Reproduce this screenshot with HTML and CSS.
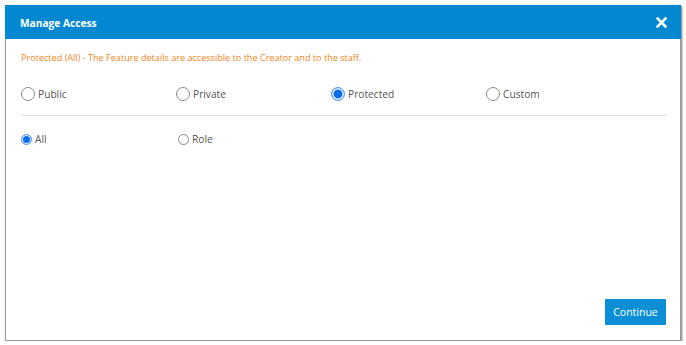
FILE: index.html
```html
<!DOCTYPE html>
<html lang="en">
<head>
  <meta charset="UTF-8" />
  <title>Manage Access</title>
  <link rel="stylesheet" href="styles.css">
</head>
<body>

  <div class="modal">
    <div class="modal-header">
      <h2>Manage Access</h2>
      <span class="close" aria-label="Close">
        <svg width="11" height="11" viewBox="0 0 11 11">
          <path d="M1.5 1.5L9.5 9.5M9.5 1.5L1.5 9.5" stroke="#fff" stroke-width="2.6" stroke-linecap="square" />
        </svg>
      </span>
    </div>

    <div class="modal-body">
      <p class="notice">Protected (All) - The Feature details are accessible to the Creator and to the staff.</p>

      <div class="options">
        <label class="option"><input type="radio" name="access" /> Public</label>
        <label class="option"><input type="radio" name="access" /> Private</label>
        <label class="option"><input type="radio" name="access" checked /> Protected</label>
        <label class="option"><input type="radio" name="access" /> Custom</label>
      </div>

      <hr class="divider" />

      <div class="options sub">
        <label class="option"><input type="radio" name="scope" checked /> All</label>
        <label class="option"><input type="radio" name="scope" /> Role</label>
      </div>
    </div>

    <div class="modal-footer">
      <button class="btn">Continue</button>
    </div>
  </div>

</body>
</html>
```

FILE: styles.css
```css
* {
  margin: 0;
  padding: 0;
  box-sizing: border-box;
}

body {
  font-family: 'Open Sans', 'Noto Sans', sans-serif;
  background-color: #fff;
  color: #555;
}

.modal {
  margin: 5px 0 0 5px;
  width: 676px;
  height: 336px;
  background: #fff;
  border: 1px solid #9a9a9a;
  border-top: none;
  box-shadow: 1px 1px 2px rgba(0, 0, 0, 0.55);
  display: flex;
  flex-direction: column;
}

.modal-header {
  height: 34px;
  background-color: #0288d1;
  display: flex;
  align-items: center;
  justify-content: space-between;
  padding: 0 14px 0 15px;
  margin: 0 -1px;
}

.modal-header h2 {
  font-size: 10.2px;
  font-weight: 700;
  color: #fff;
  padding-top: 1px;
}

.close {
  display: flex;
  cursor: pointer;
}

.modal-body {
  padding: 12px 14px 0 15px;
}

.notice {
  font-size: 9.1px;
  line-height: 14px;
  color: #f0861c;
}

.options {
  display: flex;
  margin-top: 21px;
}

.option {
  width: 155px;
  height: 16px;
  display: flex;
  align-items: center;
  gap: 3px;
  font-size: 10.2px;
  color: #555;
  cursor: pointer;
}

.option input {
  appearance: none;
  width: 14px;
  height: 14px;
  border: 1px solid #8a8a8a;
  border-radius: 50%;
  background: #fff;
  margin: 0;
}

.option input:checked {
  border: 1px solid #5aa0f5;
  background: #0a6ef0;
  box-shadow: inset 0 0 0 1.5px #fff;
}

.divider {
  border: none;
  border-top: 1px solid #dedede;
  margin-top: 13px;
}

.sub {
  margin-top: 15px;
}

.sub .option {
  width: 157px;
}

.sub .option input {
  width: 11px;
  height: 11px;
}

.sub .option input:checked {
  box-shadow: inset 0 0 0 1px #fff;
}

.modal-footer {
  margin-top: auto;
  display: flex;
  justify-content: flex-end;
  padding: 0 14px 15px 0;
}

.btn {
  background-color: #0a8fd6;
  color: #fff;
  border: none;
  border-radius: 1px;
  font-family: inherit;
  font-size: 10.5px;
  width: 61px;
  height: 26px;
  cursor: pointer;
}
```
